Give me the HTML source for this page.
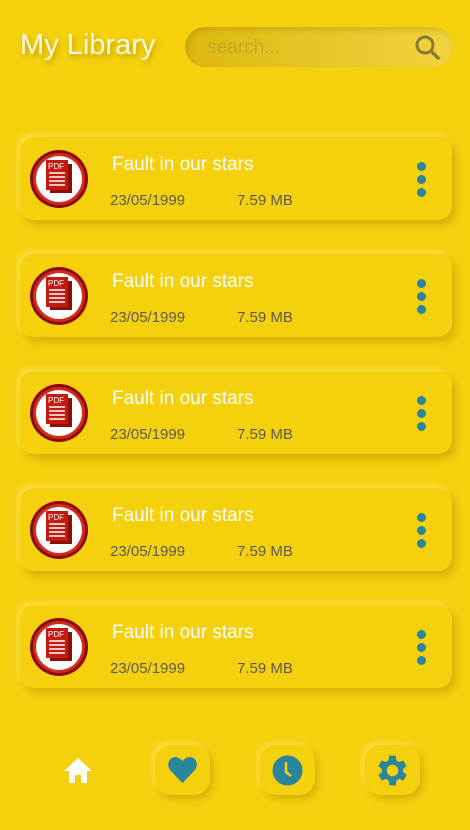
<!DOCTYPE html>
<html><head><style>
body{margin:0;width:470px;height:830px;background:#f5d00c;font-family:"Liberation Sans",sans-serif;position:relative;overflow:hidden}
.title{position:absolute;left:20px;top:29px;font-size:29px;color:#fff8e0;text-shadow:2px 3px 5px rgba(150,120,0,.5)}
.search{position:absolute;left:185px;top:27px;width:268px;height:40px;border-radius:20px;background:linear-gradient(90deg,#dcb90f,#f0d340);box-shadow:inset 3px 3px 6px rgba(160,130,0,.35)}
.search span{position:absolute;left:22px;top:10px;font-size:19px;color:#c2a62a}
.card{position:absolute;left:20px;width:432px;height:83px;border-radius:14px;background:#f5d00c;box-shadow:4px 5px 8px rgba(170,140,0,.45),-3px -3px 6px rgba(255,235,110,.6)}
.ic{position:absolute;left:9px;top:12px}
.t{position:absolute;left:92px;top:17px;font-size:19px;color:#fff}
.d{position:absolute;left:90px;top:55px;font-size:15px;color:#5c5a50}
.s{position:absolute;left:217px;top:55px;font-size:15px;color:#5c5a50}
.dots{position:absolute;left:397px;top:25px}
.dots i{display:block;width:9px;height:9px;border-radius:50%;background:#2a869c;margin-bottom:4px}
.nb{position:absolute;top:745px;width:55px;height:50px;border-radius:16px;background:#f5d00c;box-shadow:3px 4px 7px rgba(170,140,0,.45),-3px -3px 6px rgba(255,235,110,.6)}
.nb svg{position:absolute;left:12px;top:10px}
</style></head><body>
<div class="title">My Library</div>
<div class="search"><span>search...</span>
<svg style="position:absolute;left:229px;top:7px" width="27" height="27" viewBox="0 0 27 27"><circle cx="11" cy="11" r="8" fill="none" stroke="#8a7a30" stroke-width="3"/><path d="M17 17L24 24" stroke="#8a7a30" stroke-width="3.5" stroke-linecap="round"/></svg></div>

<div class="card" style="top:137px"><svg class="ic" width="60" height="60" viewBox="0 0 60 60"><circle cx="30" cy="30" r="29" fill="#8b0a05"/><circle cx="30" cy="30" r="26" fill="#d42a1c"/><circle cx="30" cy="30" r="23" fill="#fff"/><rect x="21" y="15" width="22" height="29" fill="#8b1008"/><rect x="17" y="11" width="22" height="30" fill="#c41a10"/><text x="19" y="20" font-size="8" fill="#fff" font-family="Liberation Sans">PDF</text><g stroke="#fff" stroke-width="1.5"><path d="M20 24h16M20 28h16M20 32h16M20 36h16"/></g></svg><div class="t">Fault in our stars</div><div class="d">23/05/1999</div><div class="s">7.59 MB</div><div class="dots"><i></i><i></i><i></i></div></div>
<div class="card" style="top:254px"><svg class="ic" width="60" height="60" viewBox="0 0 60 60"><circle cx="30" cy="30" r="29" fill="#8b0a05"/><circle cx="30" cy="30" r="26" fill="#d42a1c"/><circle cx="30" cy="30" r="23" fill="#fff"/><rect x="21" y="15" width="22" height="29" fill="#8b1008"/><rect x="17" y="11" width="22" height="30" fill="#c41a10"/><text x="19" y="20" font-size="8" fill="#fff" font-family="Liberation Sans">PDF</text><g stroke="#fff" stroke-width="1.5"><path d="M20 24h16M20 28h16M20 32h16M20 36h16"/></g></svg><div class="t">Fault in our stars</div><div class="d">23/05/1999</div><div class="s">7.59 MB</div><div class="dots"><i></i><i></i><i></i></div></div>
<div class="card" style="top:371px"><svg class="ic" width="60" height="60" viewBox="0 0 60 60"><circle cx="30" cy="30" r="29" fill="#8b0a05"/><circle cx="30" cy="30" r="26" fill="#d42a1c"/><circle cx="30" cy="30" r="23" fill="#fff"/><rect x="21" y="15" width="22" height="29" fill="#8b1008"/><rect x="17" y="11" width="22" height="30" fill="#c41a10"/><text x="19" y="20" font-size="8" fill="#fff" font-family="Liberation Sans">PDF</text><g stroke="#fff" stroke-width="1.5"><path d="M20 24h16M20 28h16M20 32h16M20 36h16"/></g></svg><div class="t">Fault in our stars</div><div class="d">23/05/1999</div><div class="s">7.59 MB</div><div class="dots"><i></i><i></i><i></i></div></div>
<div class="card" style="top:488px"><svg class="ic" width="60" height="60" viewBox="0 0 60 60"><circle cx="30" cy="30" r="29" fill="#8b0a05"/><circle cx="30" cy="30" r="26" fill="#d42a1c"/><circle cx="30" cy="30" r="23" fill="#fff"/><rect x="21" y="15" width="22" height="29" fill="#8b1008"/><rect x="17" y="11" width="22" height="30" fill="#c41a10"/><text x="19" y="20" font-size="8" fill="#fff" font-family="Liberation Sans">PDF</text><g stroke="#fff" stroke-width="1.5"><path d="M20 24h16M20 28h16M20 32h16M20 36h16"/></g></svg><div class="t">Fault in our stars</div><div class="d">23/05/1999</div><div class="s">7.59 MB</div><div class="dots"><i></i><i></i><i></i></div></div>
<div class="card" style="top:605px"><svg class="ic" width="60" height="60" viewBox="0 0 60 60"><circle cx="30" cy="30" r="29" fill="#8b0a05"/><circle cx="30" cy="30" r="26" fill="#d42a1c"/><circle cx="30" cy="30" r="23" fill="#fff"/><rect x="21" y="15" width="22" height="29" fill="#8b1008"/><rect x="17" y="11" width="22" height="30" fill="#c41a10"/><text x="19" y="20" font-size="8" fill="#fff" font-family="Liberation Sans">PDF</text><g stroke="#fff" stroke-width="1.5"><path d="M20 24h16M20 28h16M20 32h16M20 36h16"/></g></svg><div class="t">Fault in our stars</div><div class="d">23/05/1999</div><div class="s">7.59 MB</div><div class="dots"><i></i><i></i><i></i></div></div>

<svg style="position:absolute;left:63px;top:757px" width="30" height="28" viewBox="0 0 30 28"><path d="M15 1L1 14h5v12h6v-8h6v8h6V14h5z" fill="#fff"/></svg>
<div class="nb" style="left:155px"><svg width="31" height="30" viewBox="0 0 31 30"><path d="M15.5 28L3 15C-1 10 2 2 8.5 2c3 0 5 2 7 4 2-2 4-4 7-4C29 2 32 10 28 15z" fill="#2a869c"/></svg></div>
<div class="nb" style="left:260px"><svg width="31" height="31" viewBox="0 0 31 31"><circle cx="15.5" cy="15.5" r="15" fill="#2a869c"/><path d="M14 7v10l5 4" stroke="#f5d00c" stroke-width="2.5" fill="none"/></svg></div>
<div class="nb" style="left:365px"><svg style="left:11px;top:9px" width="33" height="33" viewBox="2 2 20 20"><path fill="#2a869c" d="M19.4 13a7.5 7.5 0 000-2l2.1-1.6-2-3.5-2.5 1a7 7 0 00-1.7-1L15 3h-4l-.4 2.9a7 7 0 00-1.7 1l-2.5-1-2 3.5L6.6 11a7.5 7.5 0 000 2l-2.1 1.6 2 3.5 2.5-1a7 7 0 001.7 1L11 21h4l.4-2.9a7 7 0 001.7-1l2.5 1 2-3.5zM13 15.5a3.5 3.5 0 110-7 3.5 3.5 0 010 7z" transform="translate(-1 0)"/></svg></div>
</body></html>
